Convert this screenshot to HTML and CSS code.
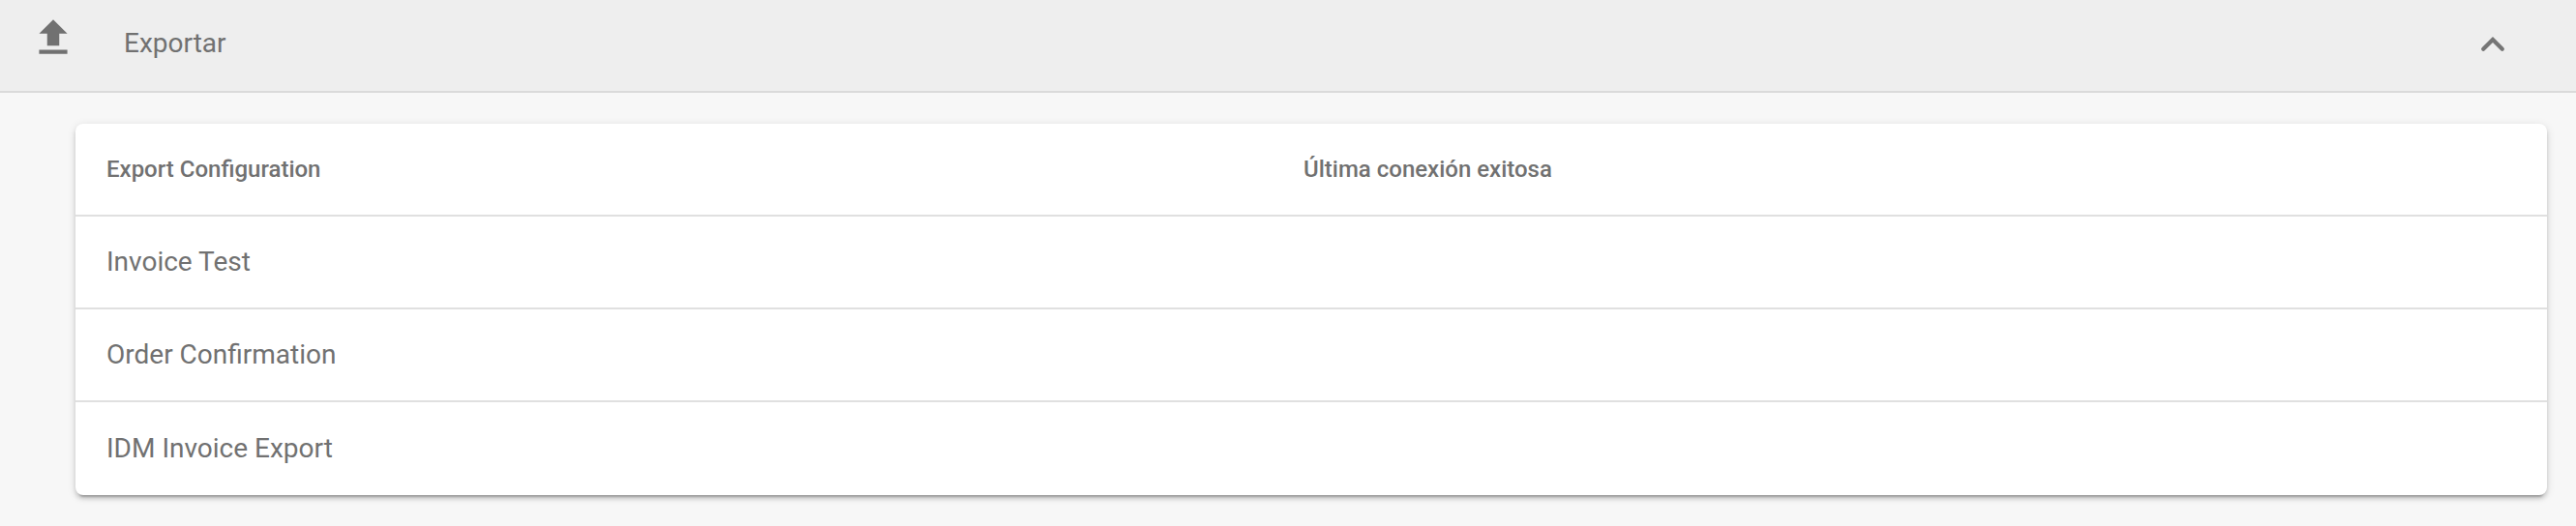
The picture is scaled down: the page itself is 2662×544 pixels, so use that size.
FILE: index.html
```
<!DOCTYPE html>
<html lang="es">
<head>
<meta charset="utf-8">
<title>Exportar</title>
<link rel="stylesheet" href="styles.css">
</head>
<body>
<header class="panel-header">
  <svg class="upload" viewBox="0 0 24 24"><path d="M9 16h6v-6h4l-7-7-7 7h4zm-4 2h14v2H5z"/></svg>
  <h1 class="title">Exportar</h1>
  <svg class="chevron" viewBox="0 0 24 24"><path d="M7.1 14.4 12 9.5l4.9 4.9"/></svg>
</header>
<main class="card">
  <div class="row head"><span>Export Configuration</span><span>Última conexión exitosa</span></div>
  <div class="row"><span>Invoice Test</span></div>
  <div class="row"><span>Order Confirmation</span></div>
  <div class="row"><span>IDM Invoice Export</span></div>
</main>
</body>
</html>
```
FILE: styles.css
```
* { box-sizing: border-box; }
body { margin: 0; height: 544px; overflow: hidden; background: #f7f7f7; color: #717171; font-family: Roboto, sans-serif; }
.panel-header { display: flex; align-items: flex-start; height: 96px; padding: 0 62px 0 30px; background: #eee; border-bottom: 2px solid #dadada; }
.upload, .chevron { flex: none; }
.upload { width: 50px; height: 50px; margin-top: 14px; fill: #717171; }
.title { margin: 28px 0 0 48px; font-size: 28px; line-height: 34px; font-weight: 400; }
.chevron { width: 48px; height: 48px; margin: 22px 0 0 auto; fill: none; stroke: #757575; stroke-width: 2.1; stroke-linecap: round; }
.card { margin: 32px 30px 0 78px; background: #fff; border-radius: 8px; box-shadow: 0 6px 2px -4px rgba(0,0,0,.2), 0 4px 4px rgba(0,0,0,.14), 0 2px 10px rgba(0,0,0,.12); }
.row { display: grid; grid-template-columns: 1237px 1fr; align-items: center; height: 96px; padding: 0 32px; border-bottom: 2px solid #e0e0e0; font-size: 28px; line-height: 34px; }
.row:last-child { border-bottom: 0; }
.head { font-size: 24px; line-height: 28px; font-weight: 500; }
```
